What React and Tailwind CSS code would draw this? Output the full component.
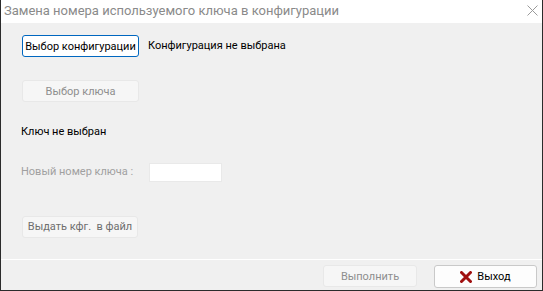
export default function App() {
  return (
    <div className="w-[543px] h-[291px] bg-[#f0f0f0] border-x border-b border-[#2b2b2b] flex flex-col font-['Roboto',sans-serif] text-[11px] whitespace-nowrap overflow-hidden">
      <div className="h-[23px] bg-white flex items-center justify-between pl-[3px] pr-[4px] shrink-0">
        <span className="text-[#8a8a8a] text-[13px] leading-none -mt-[3px]">
          Замена номера используемого ключа в конфигурации
        </span>
        <svg width="11" height="11" viewBox="0 0 11 11" className="-mt-[2px]">
          <path d="M0.5 0.5 L10.5 10.5 M10.5 0.5 L0.5 10.5" stroke="#9a9a9a" strokeWidth="1" />
        </svg>
      </div>

      <div className="h-[236px] flex flex-col pl-[20px] shrink-0">
        <div className="flex items-center mt-[12px] gap-[9px]">
          <button className="w-[117px] h-[22px] ml-px bg-white border border-[#0067c0] rounded-[3px] text-black leading-none">
            Выбор конфигурации
          </button>
          <span className="text-black">Конфигурация не выбрана</span>
        </div>

        <button className="w-[117px] h-[22px] mt-[23px] ml-px bg-[#f6f6f6] border border-[#e8e8e8] rounded-[3px] text-[#8e8e8e] leading-none">
          Выбор ключа
        </button>

        <span className="mt-[22px] text-black">Ключ не выбран</span>

        <div className="flex items-center mt-[22px]">
          <span className="w-[128px] text-[#a0a0a0]">Новый номер ключа :</span>
          <div className="w-[73px] h-[19px] bg-white border border-[#e9e9e9]" />
        </div>

        <button className="w-[116px] h-[22px] mt-[34px] ml-px bg-[#f6f6f6] border border-[#e8e8e8] rounded-[3px] text-[#6e6e6e] leading-none">
          Выдать кфг.&nbsp; в файл
        </button>
      </div>

      <div className="flex-1 border-t border-white flex items-start justify-end gap-[17px] pt-[5px] pr-[5px]">
        <button className="w-[94px] h-[22px] bg-[#f6f6f6] border border-[#e8e8e8] rounded-[3px] text-[#8e8e8e] leading-none">
          Выполнить
        </button>
        <button className="w-[103px] h-[23px] bg-[#fdfdfd] border border-[#c9c9c9] rounded-[3px] text-black leading-none flex items-center justify-center gap-[5px]">
          <svg width="12" height="12" viewBox="0 0 12 12">
            <path
              d="M1.5 1.5 L10.5 10.5 M10.5 1.5 L1.5 10.5"
              stroke="#a01010"
              strokeWidth="3"
              strokeLinecap="round"
            />
          </svg>
          Выход
        </button>
      </div>
    </div>
  );
}
